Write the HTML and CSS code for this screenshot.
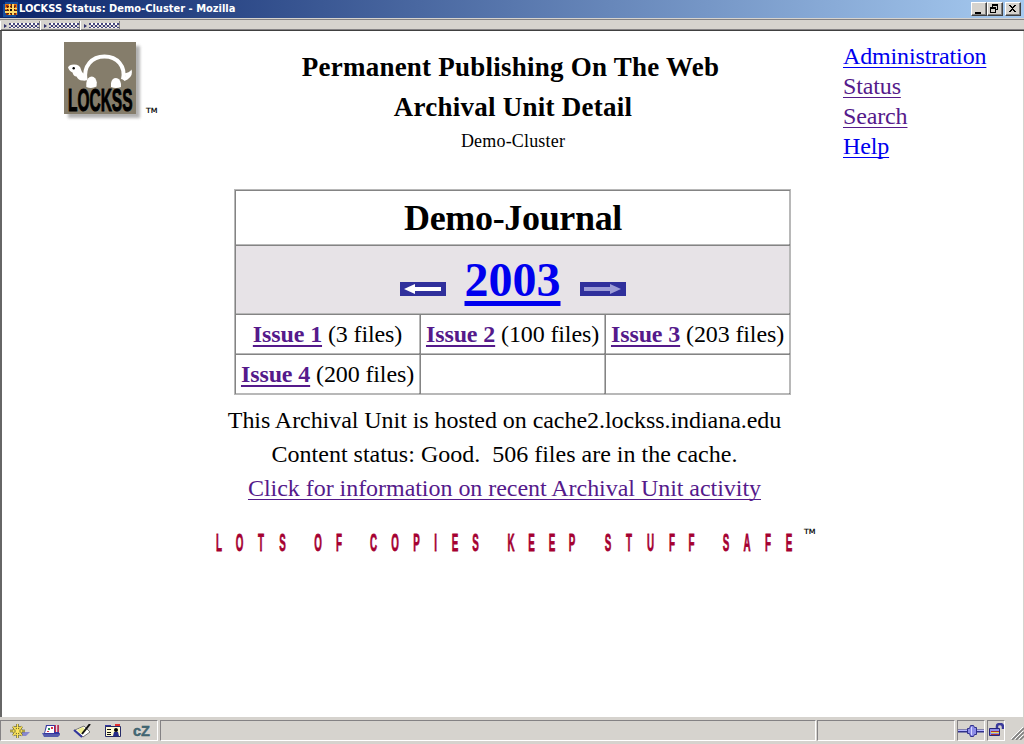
FILE: index.html
```html
<!DOCTYPE html>
<html lang="en">
<head>
<meta charset="utf-8">
<title>LOCKSS Status: Demo-Cluster</title>
<link rel="stylesheet" href="styles.css">
</head>
<body>
<div class="window">
  <header class="titlebar">
    <svg class="app-icon" width="15" height="15" viewBox="0 0 15 15" shape-rendering="crispEdges"><path fill="#164d9b" d="M0 2h2V0h13v13h-2v2H0z"/><path fill="#e87612" d="M2 2h12v11H3z"/><path fill="#9a2a08" d="M3 3h2v2H3zM11 3h2v2h-2zM3 11h2v2H3zM11 11h2v2h-2z"/><path fill="none" stroke="#5a2508" d="M4.500 4.500h7v7h-7zM8 2v11M2 8h12"/><path stroke="#ffd968" stroke-width="1.3" d="M6.500 2v11M10 2v11M2 6.500h12M2 10h12"/><path fill="#111" d="M7 7h2v2H7z"/></svg>
    <span class="caption">LOCKSS Status: Demo-Cluster - Mozilla</span>
    <div class="controls">
      <span class="control"><svg width="14" height="12"><path fill="#000" d="M3 9h6v2H3z"/></svg></span>
      <span class="control"><svg width="14" height="12" shape-rendering="crispEdges"><path fill="#000" fill-rule="evenodd" d="M4 1h6v6H8V6h1V3H5v1H4zM2 4h6v6H2zM3 6v3h4V6z"/></svg></span>
      <span class="control close"><svg width="14" height="12" shape-rendering="crispEdges"><path fill="#000" d="M3 2h2v1h1v1h1V3h1V2h2v1H9v1H8v1H7v1h1v1h1v1h1v1H8V8H7V7H6v1H5v1H3V8h1V7h1V6h1V5H5V4H4V3H3z"/></svg></span>
    </div>
  </header>
  <div class="toolbars">
    <div class="grip"><span class="grip-arrow"></span><span class="grip-dots"></span></div>
    <div class="grip"><span class="grip-arrow"></span><span class="grip-dots"></span></div>
    <div class="grip"><span class="grip-arrow"></span><span class="grip-dots"></span></div>
  </div>
  <main class="page">
    <div class="masthead">
      <svg class="logo" width="120" height="90" viewBox="50 35 120 90">
        <defs><filter id="soft"><feGaussianBlur stdDeviation="1.6"/></filter></defs>
        <rect x="68" y="46" width="72" height="72" fill="#999" opacity=".75" filter="url(#soft)"/>
        <rect x="64" y="42" width="72" height="72" fill="#857d6b"/>
        <path d="M85.500 80.500C83 66 92 56.500 104.500 56.500S126 66 123 79.500" fill="none" stroke="#fff" stroke-width="4"/>
        <path d="M68 67.500q1-3 6-3 6 0 7 5 1 4 4.500 5l1 5q-7 3-10-3-3 0-4-4-3-1-4.500-5z" fill="#fff"/>
        <path d="M131.500 69.500q2 6-4 10l-3 1.500-3-3q3-1 4-2l-2-2.500q6-.500 8-4z" fill="#fff"/>
        <text class="logo-word" x="68" y="111" textLength="64.500" lengthAdjust="spacingAndGlyphs">LOCKSS</text>
        <path d="M86.300 87V83q1-6.500 5.500-6.500 4 .500 5 6l-.300 4q-5 2.500-10.200.500z" fill="#fff"/>
        <path d="M111 87V83q1-5 5-5t5 6v3q-5 2-10 0z" fill="#fff"/>
        <circle cx="73.700" cy="68.200" r="1.200"/>
        <text class="tm" x="146" y="113" textLength="11.500" lengthAdjust="spacingAndGlyphs">TM</text>
      </svg>
      <div class="titles">
        <h1 class="heading">Permanent Publishing On The Web</h1>
        <h2 class="heading unit">Archival Unit Detail</h2>
        <div class="cluster">Demo-Cluster</div>
      </div>
      <nav class="links">
        <a class="fresh" href="#">Administration</a>
        <a href="#">Status</a>
        <a href="#">Search</a>
        <a class="fresh" href="#">Help</a>
      </nav>
    </div>
    <section class="journal">
      <div class="cell wide journal-name">Demo-Journal</div>
      <div class="cell wide year-row">
        <svg class="arrow" width="46" height="14"><path fill="#30309c" d="M0 0h46v14H0z"/><path fill="#fff" d="M4 7l11-5v3h26v4H15v3z"/></svg>
        <a class="year fresh" href="#">2003</a>
        <svg class="arrow" width="46" height="14"><path fill="#30309c" d="M0 0h46v14H0z"/><path fill="#9c9cd6" d="M41 7L30 2v3H4v4h26v3z"/></svg>
      </div>
      <div class="cell"><span><a href="#">Issue 1</a> (3 files)</span></div>
      <div class="cell"><span><a href="#">Issue 2</a> (100 files)</span></div>
      <div class="cell"><span><a href="#">Issue 3</a> (203 files)</span></div>
      <div class="cell"><span><a href="#">Issue 4</a> (200 files)</span></div>
      <div class="cell"></div>
      <div class="cell"></div>
    </section>
    <div class="summary">
      <div class="host">This Archival Unit is hosted on cache2.lockss.indiana.edu</div>
      <div class="state">Content status: Good.&nbsp; 506 files are in the cache.</div>
      <a class="activity" href="#">Click for information on recent Archival Unit activity</a>
    </div>
    <svg class="slogan" width="610" height="34" viewBox="210 523 610 34">
      <text class="slogan-text" transform="scale(.4 1)" y="550.700" x="547.5 598.8 652.5 706.3 795 847.5 933.8 987.5 1041.3 1088.8 1137.5 1188.8 1277.5 1328.8 1380 1430 1520 1572.5 1626.3 1680 1728.8 1815 1867.5 1920 1972.5">LOTSOFCOPIESKEEPSTUFFSAFE</text>
      <text class="tm" x="804" y="534" textLength="11.500" lengthAdjust="spacingAndGlyphs">TM</text>
    </svg>
  </main>
  <footer class="statusbar">
    <div class="panel components">
      <svg width="22" height="14"><path fill="#8888ce" d="M13 8h8l-4 4h-6z"/><g fill="none"><path stroke="#57572c" stroke-width="2.400" d="M1 7h15M8.500 0v14M4 2.500l9 9M13 2.500l-9 9"/><circle cx="8.500" cy="7" r="4" stroke="#57572c" stroke-width="2"/><path stroke="#ffe65c" stroke-width="1.200" d="M1 7h15M8.500 0v14M4 2.500l9 9M13 2.500l-9 9"/><circle cx="8.500" cy="7" r="4" stroke="#ffe65c"/></g></svg>
      <svg width="20" height="14"><path fill="#555bac" d="M0 9h18v2l-2 2H2z"/><path fill="#3535a0" d="M4 1h13v9H2z"/><path fill="#fff" d="M5 2h7v7H3z"/><path stroke="#dc3345" stroke-width="1.500" d="M13.500 1v7M16 1v7"/><path stroke="#fff" d="M14.700 1v7"/><path fill="#29895a" d="M6 4h2v2H6z"/><path fill="#dc3345" d="M9 3h2v2H9zM5 7h2v1H5z"/></svg>
      <svg width="20" height="14"><path fill="#fff" stroke="#777" d="M2 6l9-4 6 6-7 5z"/><path fill="#efed91" d="M4 6l6-3 3 4-5 3z"/><path stroke="#111" stroke-width="2" d="M17 0L9 10"/><path stroke="#31359b" stroke-width="2" d="M1 6l8 7"/></svg>
      <svg width="18" height="14"><path fill="#e32d2d" d="M11 0h5v3h-5z"/><path fill="#3136a0" d="M1 1h6v3H1z"/><path fill="#fffbd3" stroke="#262b69" d="M1.500 2.500h15v10h-15z"/><path stroke="#111" d="M3 5.500h4M3 8.500h4M3 10.500h4"/><circle cx="12" cy="6" r="2"/><path fill="#252b85" d="M9 12l1-4h4l1 4z"/></svg>
      <svg width="19" height="14"><text class="cz" x="0" y="12" textLength="17" lengthAdjust="spacingAndGlyphs">cZ</text></svg>
    </div>
    <div class="panel message"></div>
    <div class="panel progress"></div>
    <div class="panel online"><svg width="26" height="14"><path stroke="#30308c" stroke-width="3" d="M0 7h26"/><path stroke="#b8b8ff" d="M0 6.500h26"/><path fill="#8c8ce8" stroke="#30308c" d="M9.500 4.500h2l1-3h3l1 2h2v7h-2l-1 2h-3l-1-3h-2z"/><path stroke="#d6d6ff" d="M13.500 3v8"/></svg></div>
    <div class="panel lock"><svg width="16" height="14"><path fill="none" stroke="#3a3a9b" stroke-width="2.500" d="M9 7V3q0-2 3-2t3 3v2"/><path fill="#8c8ce8" stroke="#25257c" d="M1.500 5.500h10v7h-10z"/><path stroke="#a93535" d="M3 8.500h8M3 11.500h8"/><path stroke="#e4dc5a" d="M3 9.500h8"/></svg></div>
    <svg class="resize" width="13" height="13"><path stroke="#808080" stroke-width="1.600" d="M1 13L13 1M5 13l8-8M9 13l4-4"/><path stroke="#fff" d="M0 12L12 0M4 12l8-8M8 12l4-4"/></svg>
  </footer>
</div>
</body>
</html>
```
FILE: styles.css
```css
* { box-sizing: border-box; }
body { margin: 0; background: #fff; color: #000; font: 24px "Liberation Serif", serif; overflow: hidden; }
svg { display: block; flex: none; }
.window { width: 1024px; height: 744px; display: flex; flex-direction: column; background: #d6d3ce; }
.titlebar { height: 18px; display: flex; align-items: center; background: linear-gradient(90deg, #0a246a, #a6caf0); padding: 0 3px 0 3px; }
.caption { margin-left: 1px; color: #fff; font: bold 11px/18px "DejaVu Sans Condensed", "DejaVu Sans", sans-serif; font-stretch: condensed; white-space: nowrap; }
.controls { margin-left: auto; display: flex; }
.control { width: 16px; height: 14px; background: #d6d3ce; border: 1px solid; border-color: #fff #404040 #404040 #fff; box-shadow: inset -1px -1px #808080; }
.close { margin-left: 2px; }
.toolbars { height: 13px; display: flex; padding-top: 2px; border-top: 1px solid #d6d3ce; border-bottom: 1px solid #404040; box-shadow: inset 0 1px #848284, inset 0 -1px #848284; }
.grip { width: 40px; height: 9px; display: flex; align-items: center; padding-left: 3px; gap: 2px; border-left: 1px solid #fff; border-right: 1px solid #848284; }
.grip-arrow { border-left: 3px solid #31306b; border-top: 2.5px solid transparent; border-bottom: 2.5px solid transparent; }
.grip-dots { width: 30px; height: 5px; background: radial-gradient(circle at 1px 1px, #44447c .8px, transparent 1px) 0 0 / 4px 4px, radial-gradient(circle at 1px 1px, #44447c .8px, transparent 1px) 2px 2px / 4px 4px, radial-gradient(circle at 1px 1px, #fff .8px, transparent 1px) 2px 0 / 4px 4px; }
.grip + .grip { width: 40px; }
.page { height: 686px; background: #fff; border-left: 2px solid #666; border-right: 1px solid #d6d3ce; }
.masthead { height: 158px; display: flex; padding: 4px 0 0 48px; }
.titles { width: 673px; text-align: center; padding: 12px 0 0 13px; white-space: nowrap; }
.heading { margin: 0; font-size: 27px; line-height: 40px; font-weight: bold; letter-spacing: .24px; }
.heading:first-child { margin-left: -5px; }
.cluster { font-size: 18px; line-height: 28px; letter-spacing: .18px; }
.links { display: flex; flex-direction: column; align-items: flex-start; padding-top: 6px; line-height: 30px; letter-spacing: -.14px; }
a { color: #551a8b; text-decoration: underline; text-decoration-thickness: 1px; text-underline-offset: 3px; text-decoration-skip-ink: none; }
.fresh { color: #0000ee; }
.journal { width: 557px; height: 206px; margin-left: 232px; display: grid; grid-template-columns: repeat(3, 183px); grid-template-rows: 53px 67px 38px 38px; gap: 2px; padding: 2px; background: #848484; box-shadow: inset 1px 1px #b8b8b8, inset -1px -1px #b8b8b8; }
.cell { display: flex; align-items: center; justify-content: center; background: #fff; box-shadow: 0 1px #b8b8b8, 1px 0 #b8b8b8; white-space: nowrap; }
.cell span { letter-spacing: -.12px; }
.cell span a { font-weight: bold; text-decoration-thickness: 2px; }
.wide { grid-column: 1 / -1; }
.journal-name { font-size: 36px; font-weight: bold; letter-spacing: -.33px; padding-left: 1px; }
.year-row { background: #e7e3e7; gap: 19px; }
.arrow { margin-top: 18px; }
.year { font-size: 48px; font-weight: bold; text-decoration-thickness: 5px; text-underline-offset: 5px; }
.summary { width: 557px; margin: 8px 0 0 224px; display: flex; flex-direction: column; align-items: center; line-height: 34px; white-space: nowrap; }
.host { letter-spacing: -.055px; }
.activity { letter-spacing: -.04px; }
.slogan { margin: 18px 0 0 208px; }
.slogan-text { font: bold 24.5px "Liberation Sans", sans-serif; fill: #a50031; stroke: #a50031; stroke-width: .8px; text-anchor: middle; }
.tm { font: 7px "DejaVu Sans", sans-serif; stroke: #000; stroke-width: .2px; }
.logo-word { font: bold 32px "Liberation Sans", sans-serif; stroke: #000; stroke-width: 1px; }
.statusbar { height: 27px; display: flex; align-items: flex-start; padding: 3px 0 0; }
.panel { height: 21px; border: 1px solid; border-color: #848284 #fff #fff #848284; }
.components { width: 158px; display: flex; align-items: center; gap: 11px; padding-left: 8px; }
.message { width: 656px; margin-left: 2px; }
.progress { width: 138px; margin-left: 1px; }
.online { width: 28px; margin-left: 2px; padding-top: 3px; }
.lock { width: 18px; margin-left: 2px; padding-top: 2px; }
.resize { margin: 7px 0 0 6px; }
.cz { font: bold 14px "Liberation Sans", sans-serif; fill: #456976; stroke: #355966; stroke-width: .4px; }
```
